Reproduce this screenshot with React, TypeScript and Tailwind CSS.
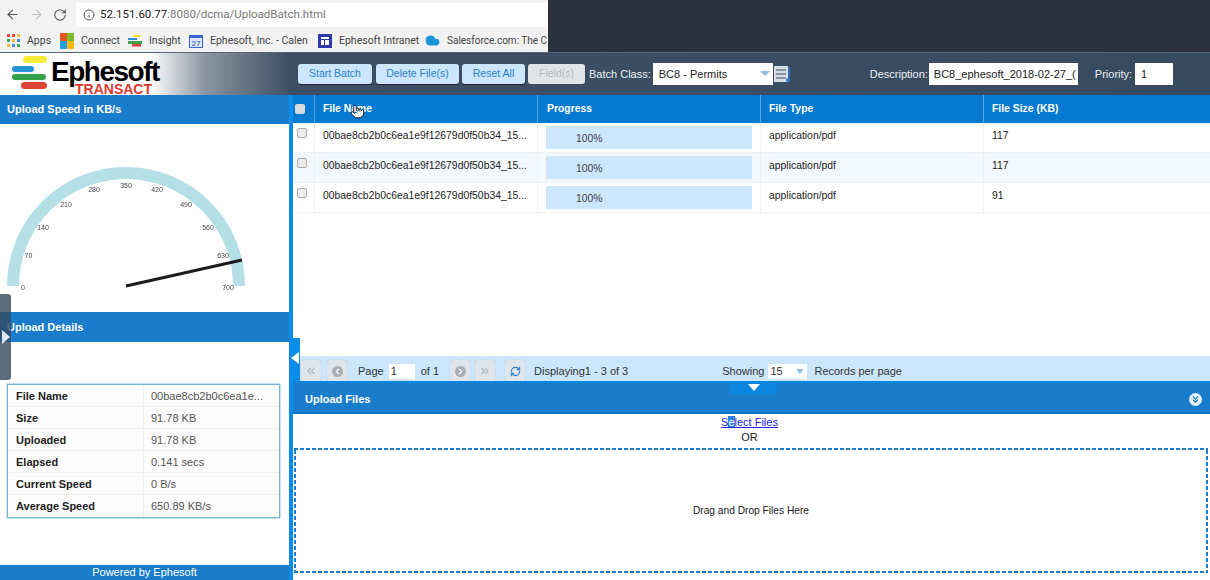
import { ArrowLeft, ArrowRight, ChevronsDown, ChevronsLeft, ChevronsRight, ChevronLeft, ChevronRight, Cloud, Info, Pointer, RefreshCw, RotateCw } from "lucide-react";

const rows = [
  { size: "117", shade: false },
  { size: "117", shade: true },
  { size: "91", shade: false },
];

const details = [
  ["File Name", "00bae8cb2b0c6ea1e..."],
  ["Size", "91.78 KB"],
  ["Uploaded", "91.78 KB"],
  ["Elapsed", "0.141 secs"],
  ["Current Speed", "0 B/s"],
  ["Average Speed", "650.89 KB/s"],
];

const ticks = [
  ["0", 23, 289.5],
  ["70", 28.5, 257.5],
  ["140", 43, 229.5],
  ["210", 66, 206.5],
  ["280", 94, 192],
  ["350", 126, 187.5],
  ["420", 157, 192],
  ["490", 186, 206.5],
  ["560", 208, 229.5],
  ["630", 223, 257.5],
  ["700", 228, 289.5],
] as const;

const Bookmark = ({ icon, label, className }: { icon: React.ReactNode; label: string; className: string }) => (
  <div className={`flex items-center gap-[7px] overflow-hidden whitespace-nowrap ${className}`}>
    <span className="flex shrink-0 items-center">{icon}</span>
    <span>{label}</span>
  </div>
);

const Gauge = () => (
  <svg width="289" height="188" viewBox="0 124 289 188" className="block [will-change:transform]">
    <path d="M13 286 A113 113 0 0 1 239 286" fill="none" stroke="#b4dfe7" strokeWidth="12" />
    {ticks.map(([t, x, y]) => (
      <text key={t} x={x} y={y} textAnchor="middle" fontSize="7" fill="#444" fontFamily="Liberation Sans, sans-serif">
        {t}
      </text>
    ))}
    <line x1="126" y1="286" x2="242" y2="260" stroke="#1c1c1c" strokeWidth="3" />
  </svg>
);

const PageBtn = ({ children, className = "" }: { children: React.ReactNode; className?: string }) => (
  <div className={`flex h-[22px] w-[20px] items-center justify-center rounded-[3px] bg-[#dfe5ea] shadow-[0_0_1px_#9aa] ${className}`}>
    {children}
  </div>
);

export default function App() {
  return (
    <div className="relative flex h-[580px] w-[1210px] flex-col overflow-hidden bg-white font-['Liberation_Sans',sans-serif] text-[11px] text-[#222]">
      {/* browser chrome */}
      <div className="flex h-[52px] bg-[#2b3340]">
        <div className="flex w-[548px] flex-col bg-[#f2f2f2]">
          <div className="flex h-[29px] items-center pl-[5px] text-[#555]">
            <ArrowLeft size={15} strokeWidth={1.8} />
            <ArrowRight size={15} strokeWidth={1.8} className="ml-[9px] text-[#bbb]" />
            <RotateCw size={14} strokeWidth={1.8} className="ml-[9px]" />
            <div className="ml-[9px] flex h-[24px] flex-1 items-center gap-[5px] bg-white pl-[7px] font-['Roboto',sans-serif] text-[11.5px]">
              <Info size={12} />
              <span className="text-[#222]">52.151.60.77</span>
              <span className="-ml-[5px] text-[#777]">:8080/dcma/UploadBatch.html</span>
            </div>
          </div>
          <div className="flex h-[23px] items-center pl-[7px] font-['Roboto',sans-serif] text-[10.5px] text-[#444]">
            <Bookmark
              className="w-[53px]"
              label="Apps"
              icon={
                <svg width="13" height="13" viewBox="0 0 13 13">
                  <g fill="#e44"><rect width="3" height="3" /><rect x="5" width="3" height="3" /></g>
                  <rect x="10" width="3" height="3" fill="#fb3" />
                  <rect y="5" width="3" height="3" fill="#3a5" /><rect x="5" y="5" width="3" height="3" fill="#fb3" /><rect x="10" y="5" width="3" height="3" fill="#48e" />
                  <rect y="10" width="3" height="3" fill="#fb3" /><rect x="5" y="10" width="3" height="3" fill="#48e" /><rect x="10" y="10" width="3" height="3" fill="#3a5" />
                </svg>
              }
            />
            <Bookmark
              className="w-[68px]"
              label="Connect"
              icon={
                <svg width="14" height="16" viewBox="0 0 14 16">
                  <rect width="7" height="8" fill="#e8541f" /><rect x="7" width="7" height="8" fill="#7db928" />
                  <rect y="8" width="7" height="8" fill="#1fa0e0" /><rect x="7" y="8" width="7" height="8" fill="#fbb810" />
                </svg>
              }
            />
            <Bookmark
              className="w-[61px]"
              label="Insight"
              icon={
                <svg width="14" height="12" viewBox="0 0 14 12">
                  <rect x="5" width="8" height="2" fill="#f5e13b" /><rect y="3" width="9" height="2" fill="#2a8fd6" />
                  <rect y="6" width="14" height="3" fill="#3fa34d" /><rect x="4" y="9" width="9" height="2.5" fill="#d8402f" />
                </svg>
              }
            />
            <Bookmark
              className="mr-[9px] w-[120px]"
              label="Ephesoft, Inc. - Calen"
              icon={
                <svg width="14" height="14" viewBox="0 0 14 14">
                  <rect y="1" width="14" height="13" fill="#3b64d0" /><rect x="1" y="4" width="12" height="9" fill="#dfe7fa" />
                  <text x="7" y="12" textAnchor="middle" fontSize="8" fill="#2a50b0">27</text>
                </svg>
              }
            />
            <Bookmark
              className="w-[107px]"
              label="Ephesoft Intranet"
              icon={
                <svg width="14" height="14" viewBox="0 0 14 14">
                  <rect width="14" height="14" fill="#2f3aa8" /><rect x="3" y="3" width="8" height="2" fill="#fff" />
                  <rect x="3" y="6" width="3" height="5" fill="#fff" /><rect x="7" y="6" width="4" height="5" fill="#fff" />
                </svg>
              }
            />
            <Bookmark className="flex-1 text-[10px]" label="Salesforce.com: The C" icon={<Cloud size={15} fill="#1b96d8" stroke="#1b96d8" />} />
          </div>
        </div>
        <div className="flex-1" />
      </div>

      {/* app header */}
      <div className="flex h-[43px] items-center border-t border-[#56657a] bg-[linear-gradient(90deg,#fff_0,#fff_150px,#8a95a2_205px,#3d4f65_290px,#364a60_100%)] pl-[11px]">
        <div className="relative h-[42px] w-[287px] shrink-0">
          <svg width="40" height="36" viewBox="0 0 40 36" className="absolute left-0 top-[3px]">
            <rect x="12" y="0" width="24" height="7" rx="3.5" fill="#f6ec3a" />
            <rect x="1" y="10" width="22" height="6" rx="3" fill="#2493d8" />
            <rect x="1" y="18" width="34" height="6" rx="3" fill="#35a148" />
            <rect x="10" y="26" width="26" height="7" rx="3.5" fill="#dc4436" />
          </svg>
          <span className="absolute left-[40px] top-[7px] text-[28px] font-bold leading-[24px] tracking-[-1.5px] text-black">Ephesoft</span>
          <span className="absolute left-[64px] top-[31px] text-[14px] font-bold leading-[11px] text-[#e03a30]">TRANSACT</span>
        </div>
        <div className="flex items-center gap-[3px] text-[10.5px] text-[#2a7fc9]">
          <button className="h-[20px] w-[74px] rounded-[3px] bg-[#cbe6fd] shadow-[0_1px_1px_#223]">Start Batch</button>
          <button className="ml-[1px] h-[20px] w-[83px] rounded-[3px] bg-[#cbe6fd] shadow-[0_1px_1px_#223]">Delete File(s)</button>
          <button className="h-[20px] w-[63px] rounded-[3px] bg-[#cbe6fd] shadow-[0_1px_1px_#223]">Reset All</button>
          <button className="h-[20px] w-[57px] rounded-[3px] bg-[#e2e4e6] text-[#b5bbc0]">Field(s)</button>
        </div>
        <span className="ml-[4px] text-[#eef1f4]">Batch Class:</span>
        <div className="relative ml-[2px] flex h-[22px] w-[120px] items-center bg-white pl-[6px] text-[#222]">
          BC8 - Permits
          <span className="absolute right-[3px] top-[8px] h-0 w-0 border-x-[5px] border-t-[5px] border-x-transparent border-t-[#8cc0e6]" />
        </div>
        <svg width="16" height="18" viewBox="0 0 16 18" className="ml-[1px]">
          <rect x="0" y="1" width="14" height="16" fill="#d5dce3" />
          <rect x="2" y="4" width="10" height="2" fill="#8a98a6" /><rect x="2" y="8" width="10" height="2" fill="#8a98a6" /><rect x="2" y="12" width="10" height="2" fill="#8a98a6" />
          <rect x="14" y="2" width="2" height="12" fill="#2f6fb3" /><circle cx="14" cy="15" r="2" fill="#2f7fd0" />
        </svg>
        <span className="ml-[80px] text-[#eef1f4]">Description:</span>
        <div className="ml-[1px] flex h-[22px] w-[149px] items-center overflow-hidden whitespace-nowrap bg-white pl-[5px] text-[#222]">
          BC8_ephesoft_2018-02-27_(
        </div>
        <span className="ml-[17px] text-[#eef1f4]">Priority:</span>
        <div className="ml-[3px] flex h-[22px] w-[38px] items-center bg-white pl-[6px] text-[#222]">1</div>
      </div>

      {/* main */}
      <div className="flex min-h-0 flex-1">
        <div className="flex w-[289px] flex-col">
          <div className="flex h-[29px] items-center bg-[#1a7dcb] pl-[7px] font-bold text-white">Upload Speed in KB/s</div>
          <div className="h-[188px]">
            <Gauge />
          </div>
          <div className="flex h-[30px] items-center bg-[#1a7dcb] pl-[7px] font-bold text-white">Upload Details</div>
          <div className="flex-1 px-[7px] pr-[9px] pt-[42px]">
            <div className="border border-[#7ab4d0] shadow-[0_0_0_0.5px_#8dc1d9]">
              {details.map(([k, v]) => (
                <div key={k} className="grid h-[22px] grid-cols-[136px_1fr] border-b border-[#f0f0f0] bg-[#fcfcfc] pt-[1px] last:border-b-0">
                  <div className="flex items-center border-r border-[#f0f0f0] pl-[8px] font-bold text-[#222]">{k}</div>
                  <div className="flex items-center pl-[7px] text-[#555]">{v}</div>
                </div>
              ))}
            </div>
          </div>
          <div className="flex h-[15px] items-center justify-center bg-[#1a7dcb] text-white">Powered by Ephesoft</div>
        </div>

        <div className="w-[4px] bg-[#0b8ce9]" />

        <div className="flex min-w-0 flex-1 flex-col">
          <div className="grid h-[28px] grid-cols-[21px_223px_223px_223px_1fr] bg-[#0679d0] text-[10.4px] font-bold text-white">
            <div className="flex items-center pl-[2px]">
              <span className="h-[10px] w-[10px] rounded-[2px] bg-[#d5dade]" />
            </div>
            <div className="flex items-center border-l border-[#5aa5e0] pl-[8px]">File Name</div>
            <div className="flex items-center border-l border-[#5aa5e0] pl-[9px]">Progress</div>
            <div className="flex items-center border-l border-[#5aa5e0] pl-[8px]">File Type</div>
            <div className="flex items-center border-l border-[#5aa5e0] pl-[8px]">File Size (KB)</div>
          </div>
          {rows.map((r, i) => (
            <div key={i} className={`grid h-[30px] grid-cols-[21px_223px_223px_223px_1fr] border-b border-[#eef1f4] text-[10.4px] ${r.shade ? "bg-[#f3f8fd]" : "bg-white"}`}>
              <div className="pl-[4px] pt-[5px]">
                <span className="block h-[10px] w-[10px] rounded-[2px] border border-[#aaa] bg-[#ececec]" />
              </div>
              <div className="flex items-center border-l border-[#eef1f4] pb-[3px] pl-[8px]">00bae8cb2b0c6ea1e9f12679d0f50b34_15...</div>
              <div className="flex items-center border-l border-[#eef1f4] pl-[8px] pr-[8px]">
                <div className="flex h-[23px] w-full items-center bg-[#cbe6fd] pl-[30px] pt-[2px] text-[#444]">100%</div>
              </div>
              <div className="flex items-center border-l border-[#eef1f4] pb-[3px] pl-[8px]">application/pdf</div>
              <div className="flex items-center border-l border-[#eef1f4] pb-[3px] pl-[8px]">{r.size}</div>
            </div>
          ))}
          <div className="h-[143px] shrink-0" />
          <div className="flex h-[25px] shrink-0 items-center bg-[#cbe6fd] pl-[8px] pt-[5px] text-[#333]">
            <PageBtn><ChevronsLeft size={12} strokeWidth={2.5} className="text-[#b3b9bf]" /></PageBtn>
            <PageBtn className="ml-[6px]"><span className="flex h-[11px] w-[11px] items-center justify-center rounded-full bg-[#a9b0b7]"><ChevronLeft size={9} strokeWidth={3} className="text-white" /></span></PageBtn>
            <span className="ml-[11px]">Page</span>
            <div className="ml-[5px] flex h-[15px] w-[26px] items-center bg-white pl-[2px]">1</div>
            <span className="ml-[6px]">of 1</span>
            <PageBtn className="ml-[11px]"><span className="flex h-[11px] w-[11px] items-center justify-center rounded-full bg-[#a9b0b7]"><ChevronRight size={9} strokeWidth={3} className="text-white" /></span></PageBtn>
            <PageBtn className="ml-[5px]"><ChevronsRight size={12} strokeWidth={2.5} className="text-[#b3b9bf]" /></PageBtn>
            <PageBtn className="ml-[10px]"><RefreshCw size={11} strokeWidth={2.5} className="text-[#2a7fc9]" /></PageBtn>
            <span className="ml-[9px]">Displaying1 - 3 of 3</span>
            <span className="ml-[94px]">Showing</span>
            <div className="relative ml-[4px] flex h-[15px] w-[39px] items-center bg-white pl-[2px]">
              15
              <span className="absolute right-[3px] top-[5px] h-0 w-0 border-x-[4px] border-t-[5px] border-x-transparent border-t-[#8cc0e6]" />
            </div>
            <span className="ml-[7px]">Records per page</span>
          </div>
          <div className="flex h-[33px] shrink-0 items-center justify-between border-y-2 border-b-[#0c78cc] border-t-[#0b86e0] bg-[#1a7dcb] pl-[12px] pr-[8px] pt-[4px] font-bold text-white">
            Upload Files
            <span className="flex h-[13px] w-[13px] items-center justify-center rounded-full bg-[#e6f2fb]">
              <ChevronsDown size={11} strokeWidth={2.5} className="text-[#1a7dcb]" />
            </span>
          </div>
          <div className="flex min-h-0 flex-1 flex-col items-center">
            <a className="mt-[1px] -translate-x-[2px] leading-[15px] text-[#2222dd] underline">
              S<span className="bg-[#2a7fe0] text-white">e</span>lect Files
            </a>
            <span className="-translate-x-[2px] leading-[15px]">OR</span>
            <div className="mb-[7px] ml-[1px] mr-[2px] mt-[3px] flex w-[914px] flex-1 items-center justify-center bg-[linear-gradient(90deg,#1a7dcb_4px,transparent_4px),linear-gradient(90deg,#1a7dcb_4px,transparent_4px),linear-gradient(0deg,#1a7dcb_4px,transparent_4px),linear-gradient(0deg,#1a7dcb_4px,transparent_4px)] bg-[length:6px_2px,6px_2px,2px_6px,2px_6px] bg-[position:0_0,0_100%,0_0,100%_0] text-[10.2px] [background-repeat:repeat-x,repeat-x,repeat-y,repeat-y]">
              Drag and Drop Files Here
            </div>
          </div>
        </div>
      </div>

      {/* overlays */}
      <div className="absolute left-0 top-[294px] flex h-[86px] w-[11px] items-center rounded-r-[3px] bg-[#34495e]/80 pl-[2px]">
        <span className="h-0 w-0 border-y-[7px] border-l-[8px] border-y-transparent border-l-[#dbe9f5]" />
      </div>
      <div className="absolute left-[289px] top-[338px] flex h-[43px] w-[11px] items-center justify-center bg-[#0b8ce9] pb-[4px]">
        <span className="h-0 w-0 border-y-[6px] border-r-[8px] border-y-transparent border-r-white" />
      </div>
      <div className="absolute left-[730px] top-[382px] flex h-[12px] w-[47px] justify-center bg-[#0b86e0] pt-[2px]">
        <span className="h-0 w-0 border-x-[6px] border-t-[7px] border-x-transparent border-t-white" />
      </div>
      <Pointer size={15} fill="#fff" strokeWidth={1.6} className="absolute left-[350px] top-[104px] text-[#222]" />
    </div>
  );
}
